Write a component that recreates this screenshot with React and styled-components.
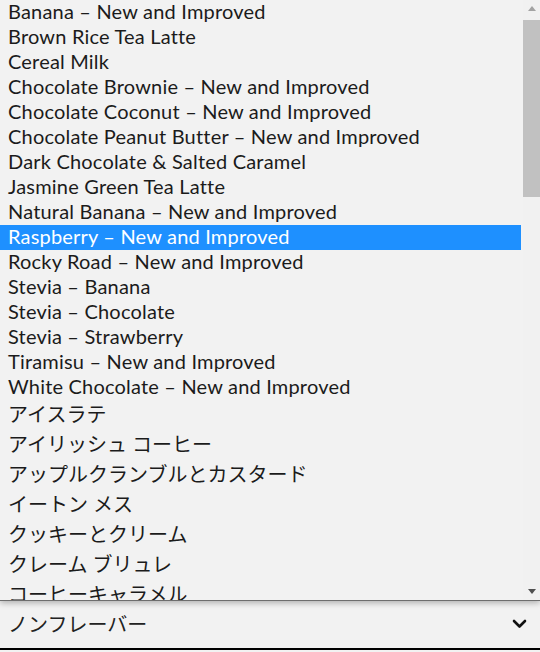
import React from 'react';
import styled, { createGlobalStyle } from 'styled-components';

const FLAVOURS = [
  'Banana – New and Improved',
  'Brown Rice Tea Latte',
  'Cereal Milk',
  'Chocolate Brownie – New and Improved',
  'Chocolate Coconut – New and Improved',
  'Chocolate Peanut Butter – New and Improved',
  'Dark Chocolate & Salted Caramel',
  'Jasmine Green Tea Latte',
  'Natural Banana – New and Improved',
  'Raspberry – New and Improved',
  'Rocky Road – New and Improved',
  'Stevia – Banana',
  'Stevia – Chocolate',
  'Stevia – Strawberry',
  'Tiramisu – New and Improved',
  'White Chocolate – New and Improved',
  'アイスラテ',
  'アイリッシュ コーヒー',
  'アップルクランブルとカスタード',
  'イートン メス',
  'クッキーとクリーム',
  'クレーム ブリュレ',
  'コーヒーキャラメル',
  'ストロベリー',
  'チョコレート',
];

const SELECTED = 'Raspberry – New and Improved';
const isJapanese = (text) => /[\u3040-\u30ff\u4e00-\u9fff]/.test(text);

const GlobalStyle = createGlobalStyle`
  body {
    margin: 0;
    background: #f2f2f2;
    font-family: Lato, "Noto Sans CJK JP", sans-serif;
  }
`;

export default function App() {
  return (
    <>
      <GlobalStyle />
      <Page>
        <Panel>
          <OptionList>
            {FLAVOURS.map((name) => (
              <Option key={name} $selected={name === SELECTED} $cjk={isJapanese(name)}>
                {name}
              </Option>
            ))}
          </OptionList>
          <ScrollBar>
            <ArrowButton>
              <Triangle $up />
            </ArrowButton>
            <Thumb />
            <Track />
            <ArrowButton>
              <Triangle />
            </ArrowButton>
          </ScrollBar>
        </Panel>
        <SelectBox>
          <span>ノンフレーバー</span>
          <svg width="15" height="10" viewBox="0 0 15 10">
            <path d="M2 2 L7.5 7.5 L13 2" fill="none" stroke="#111" strokeWidth="2.6" strokeLinecap="round" strokeLinejoin="round" />
          </svg>
        </SelectBox>
      </Page>
    </>
  );
}

const Page = styled.div`
  width: 540px;
  height: 652px;
  display: flex;
  flex-direction: column;
  background: #f2f2f2;
`;

const Panel = styled.div`
  position: relative;
  z-index: 1;
  display: flex;
  height: 600px;
  border-bottom: 1px solid #6e6e6e;
  box-shadow: 0 2px 6px rgba(0, 0, 0, 0.28);
  background: #f2f2f2;
`;

const OptionList = styled.ul`
  flex: 1;
  margin: 0;
  padding: 0;
  list-style: none;
  overflow: hidden;
`;

const Option = styled.li`
  margin: 0 2px 0 0;
  padding: 0 8px;
  height: ${(p) => (p.$cjk ? '30px' : '25px')};
  font-size: 20px;
  line-height: ${(p) => (p.$cjk ? '29px' : '23px')};
  letter-spacing: ${(p) => (p.$cjk ? '0' : '0.19px')};
  white-space: nowrap;
  color: ${(p) => (p.$selected ? '#ffffff' : '#1b1b1b')};
  background: ${(p) => (p.$selected ? '#1e90ff' : 'transparent')};
`;

const ScrollBar = styled.div`
  width: 17px;
  display: flex;
  flex-direction: column;
  background: #f1f1f1;
`;

const ArrowButton = styled.div`
  height: 17px;
  display: flex;
  align-items: center;
  justify-content: center;
`;

const Triangle = styled.div`
  width: 0;
  height: 0;
  border-left: 4.5px solid transparent;
  border-right: 4.5px solid transparent;
  ${(p) =>
    p.$up ? 'border-bottom: 5px solid #a3a3a3;' : 'border-top: 5px solid #505050;'}
`;

const Thumb = styled.div`
  margin-top: 3px;
  height: 177px;
  background: #c1c1c1;
`;

const Track = styled.div`
  flex: 1;
`;

const SelectBox = styled.div`
  height: 49px;
  display: flex;
  align-items: center;
  justify-content: space-between;
  padding: 0 13px 2px 8px;
  box-sizing: border-box;
  border-bottom: 2px solid #000;
  font-size: 20px;
  line-height: 28px;
  color: #222;
`;
